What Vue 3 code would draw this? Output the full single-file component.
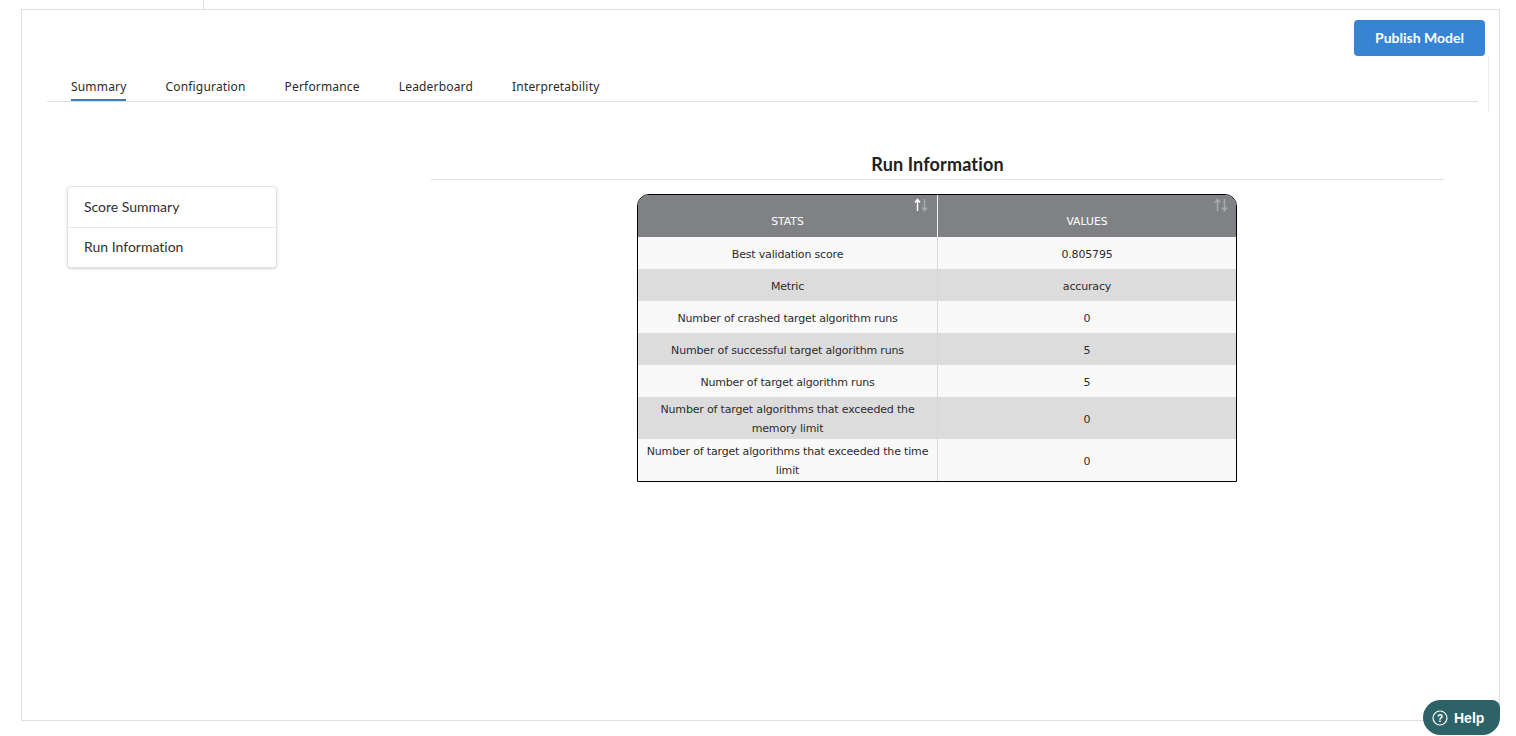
<script setup>
const tabs = ['Summary', 'Configuration', 'Performance', 'Leaderboard', 'Interpretability']
const sections = ['Score Summary', 'Run Information']

const rows = [
  { stat: 'Best validation score', value: '0.805795' },
  { stat: 'Metric', value: 'accuracy' },
  { stat: 'Number of crashed target algorithm runs', value: '0' },
  { stat: 'Number of successful target algorithm runs', value: '5' },
  { stat: 'Number of target algorithm runs', value: '5' },
  { stat: 'Number of target algorithms that exceeded the memory limit', value: '0' },
  { stat: 'Number of target algorithms that exceeded the time limit', value: '0' }
]
</script>

<template>
  <div class="page">
    <div class="top-stub"></div>

    <div class="frame">
      <div class="actions">
        <button class="publish">Publish Model</button>
      </div>

      <div class="tabs-wrap">
        <nav class="tabs">
          <a v-for="(tab, i) in tabs" :key="tab" class="tab" :class="{ active: i === 0 }">{{ tab }}</a>
        </nav>
      </div>

      <div class="content">
        <aside class="side">
          <div v-for="s in sections" :key="s" class="side-item">{{ s }}</div>
        </aside>

        <section class="panel">
          <h2 class="title">Run Information</h2>
          <table class="stats">
            <thead>
              <tr>
                <th class="col-stats">
                  <svg class="sort" width="16" height="14" viewBox="0 0 16 14">
                    <path d="M4.5 13V2M2 4.5 4.5 1.5 7 4.5" fill="none" stroke="#fff" stroke-width="1.5" />
                    <path d="M11.5 1V12M9 9.5 11.5 12.5 14 9.5" fill="none" stroke="#a9abae" stroke-width="1.5" />
                  </svg>
                  STATS
                </th>
                <th>
                  <svg class="sort" width="16" height="14" viewBox="0 0 16 14">
                    <path d="M4.5 13V2M2 4.5 4.5 1.5 7 4.5" fill="none" stroke="#a9abae" stroke-width="1.5" />
                    <path d="M11.5 1V12M9 9.5 11.5 12.5 14 9.5" fill="none" stroke="#a9abae" stroke-width="1.5" />
                  </svg>
                  VALUES
                </th>
              </tr>
            </thead>
            <tbody>
              <tr v-for="row in rows" :key="row.stat">
                <td class="col-stats">{{ row.stat }}</td>
                <td>{{ row.value }}</td>
              </tr>
            </tbody>
          </table>
        </section>
      </div>
    </div>

    <div class="help">
      <svg width="16" height="16" viewBox="0 0 16 16">
        <circle cx="8" cy="8" r="7" fill="none" stroke="#fff" stroke-width="1.2" />
        <text x="8" y="11.6" text-anchor="middle" fill="#fff" font-size="10" font-family="Liberation Sans, sans-serif">?</text>
      </svg>
      <span>Help</span>
    </div>
  </div>
</template>

<style scoped>
.page {
  width: 1516px;
  height: 736px;
  padding-left: 21px;
  box-sizing: border-box;
  overflow: hidden;
  font-family: 'Lato', sans-serif;
  font-variant-ligatures: none;
  color: #212121;
}

.top-stub {
  width: 182px;
  height: 9px;
  border-right: 1px solid #dedede;
}

.frame {
  width: 1479px;
  height: 712px;
  box-sizing: border-box;
  border: 1px solid #e0e0e0;
}

.actions {
  display: flex;
  justify-content: flex-end;
  padding: 10px 14px 0 0;
}

.publish {
  width: 131px;
  height: 36px;
  padding: 0 0 2px;
  border: none;
  border-radius: 4px;
  background: #3684d3;
  color: #fff;
  font-family: 'Lato', sans-serif;
  font-variant-ligatures: none;
  font-size: 14px;
  font-weight: 700;
}

.tabs-wrap {
  width: 1467px;
  height: 56px;
  box-sizing: border-box;
  padding-left: 25px;
  border-right: 1px solid #eeeeee;
}

.tabs {
  display: flex;
  gap: 39px;
  width: 1431px;
  height: 46px;
  box-sizing: border-box;
  padding: 22px 0 0 24px;
  border-bottom: 1px solid #e0e0e0;
}

.tab {
  height: 23px;
  box-sizing: border-box;
  font-family: 'Noto Sans', sans-serif;
  font-size: 12px;
  line-height: 17px;
  letter-spacing: 0.175px;
  color: #2b2b2b;
}

.tab.active {
  border-bottom: 2px solid #3a7cbd;
}

.content {
  display: flex;
  align-items: flex-start;
  padding: 0 0 0 45px;
}

.side {
  width: 210px;
  height: 82px;
  box-sizing: border-box;
  margin-top: 74px;
  border: 1px solid #e3e3e3;
  border-radius: 4px;
  box-shadow: 0 1px 3px rgba(0, 0, 0, 0.16);
  background: #fff;
}

.side-item {
  height: 40px;
  box-sizing: border-box;
  padding-left: 16px;
  font-size: 14px;
  line-height: 40px;
  color: #303030;
}

.side-item + .side-item {
  line-height: 38px;
  border-top: 1px solid #e8e8e8;
}

.panel {
  width: 1013px;
  margin-left: 154px;
  display: flex;
  flex-direction: column;
  align-items: flex-start;
}

.title {
  width: 100%;
  height: 38px;
  box-sizing: border-box;
  margin: 30px 0 14px;
  border-bottom: 1px solid #dedede;
  font-size: 18px;
  font-weight: 700;
  line-height: 44px;
  letter-spacing: 0.15px;
  text-align: center;
  color: #212121;
}

.stats {
  width: 600px;
  margin-left: 206px;
  table-layout: fixed;
  border-collapse: separate;
  border-spacing: 0;
  border: 1px solid #000;
  border-radius: 12px 12px 0 0;
  font-family: 'DejaVu Sans', sans-serif;
  font-size: 11px;
  line-height: 19px;
  letter-spacing: -0.17px;
  color: #2c2c2c;
  text-align: center;
}

.stats th {
  position: relative;
  height: 42px;
  box-sizing: border-box;
  padding: 10px 0 0;
  background: #7f8184;
  color: #fff;
  font-size: 10.8px;
  font-weight: 400;
  letter-spacing: 0;
}

.stats th:first-child {
  border-top-left-radius: 11px;
}

.stats th:last-child {
  border-top-right-radius: 11px;
}

.stats td {
  height: 32px;
  box-sizing: border-box;
  padding: 3px 5px 1px;
  background: #f9f9f9;
}

.stats tbody tr:nth-child(even) td {
  background: #dcdcdc;
}

.col-stats {
  width: 300px;
  border-right: 1px solid #d8d8d8;
}

.stats th.col-stats {
  border-right-color: #f2f2f2;
}

.sort {
  position: absolute;
  top: 3px;
  right: 8px;
}

.stats th:last-child .sort {
  right: 7px;
}

.help {
  position: fixed;
  left: 1423px;
  top: 700px;
  width: 77px;
  height: 35px;
  box-sizing: border-box;
  display: flex;
  align-items: center;
  gap: 6px;
  padding-left: 9px;
  background: #2d6268;
  border-radius: 18px 8px 18px 18px;
  color: #fff;
  font-family: 'Liberation Sans', sans-serif;
  font-size: 14px;
  font-weight: 700;
}
</style>
